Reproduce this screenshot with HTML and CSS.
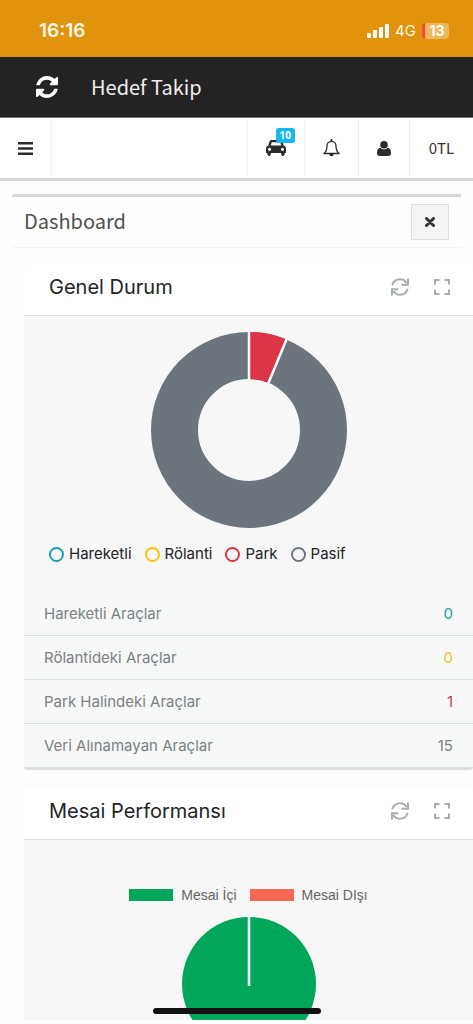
FILE: index.html
```html
<!DOCTYPE html>
<html lang="tr">
<head>
<meta charset="utf-8">
<meta name="viewport" content="width=device-width, initial-scale=1">
<title>Hedef Takip</title>
<link rel="stylesheet" href="styles.css">
</head>
<body>
<svg class="defs" aria-hidden="true">
  <symbol id="sync" viewBox="0 0 1536 1536"><path d="M1511 928q0 5-1 7-64 268-268 434.500t-478 166.500q-146 0-282.500-55t-243.500-157l-129 129q-19 19-45 19t-45-19-19-45v-448q0-26 19-45t45-19h448q26 0 45 19t19 45-19 45l-137 137q71 66 161 102t187 36q134 0 250-65t186-179q11-17 53-117 8-23 30-23h192q13 0 22.500 9.500t9.500 22.500zm25-800v448q0 26-19 45t-45 19h-448q-26 0-45-19t-19-45 19-45l138-138q-148-137-349-137-134 0-250 65t-186 179q-11 17-53 117-8 23-30 23h-199q-13 0-22.500-9.500t-9.500-22.500v-7q65-268 270-434.500t480-166.500q146 0 284 55.500t245 156.500l130-129q19-19 45-19t45 19 19 45z"/></symbol>
  <symbol id="reload" viewBox="0 0 18 18"><path d="M1.300 7.200C2.300 3.600 5.300 1.200 9 1.200c2.900 0 5.200 1.400 6.700 3.900M16.700 10.800c-1 3.600-4 6-7.700 6-2.900 0-5.200-1.400-6.700-3.900M17 .5v6.300h-6.300M1 17.500v-6.300h6.300" fill="none" stroke="currentColor" stroke-width="2"/></symbol>
  <symbol id="expand" viewBox="0 0 16 16"><path d="M1 5.500V1h4.500M10.500 1H15v4.500M15 10.500V15h-4.500M5.500 15H1v-4.500" fill="none" stroke="currentColor" stroke-width="2"/></symbol>
</svg>
<div class="screen">
  <div class="status">
    <span class="clock">16:16</span>
    <div class="status-right">
      <svg width="22" height="14" viewBox="0 0 22 14" fill="#fff"><rect y="9" width="4" height="5" rx="1"/><rect x="6" y="6" width="4" height="8" rx="1"/><rect x="12" y="3" width="4" height="11" rx="1"/><rect x="18" width="4" height="14" rx="1"/></svg>
      <span class="network">4G</span>
      <span class="battery">13</span>
    </div>
  </div>
  <header class="appbar">
    <button class="icon-btn" aria-label="Yenile"><svg width="22" height="22" fill="currentColor"><use href="#sync"/></svg></button>
    <h1>Hedef Takip</h1>
  </header>
  <nav class="toolbar">
    <button class="tool menu" aria-label="Menü"><svg width="15" height="13" viewBox="0 0 15 13"><path d="M0 1.300h15M0 6.500h15M0 11.700h15" stroke="currentColor" stroke-width="2.500"/></svg></button>
    <button class="tool cars" aria-label="Araçlar">
      <svg width="20" height="16" viewBox="0 0 20 16"><path fill="currentColor" fill-rule="evenodd" d="M5.500 0h9c1 0 1.700.6 2 1.500l1.200 4.200C19.200 6 20 7 20 8.300v4.200c0 .3-.2.500-.5.500H18.600v1.200a1.700 1.700 0 0 1-3.400 0V13H4.800v1.200a1.700 1.700 0 0 1-3.400 0V13H.5c-.3 0-.5-.2-.5-.5V8.300C0 7 .8 6 2.300 5.700l1.200-4.200C3.800.6 4.500 0 5.500 0zM5.700 2.200 4.800 5.600h10.400l-.9-3.400zM3.500 7.700a1.600 1.600 0 1 0 0 3.200 1.600 1.600 0 0 0 0-3.200zm13 0a1.600 1.600 0 1 0 0 3.200 1.600 1.600 0 0 0 0-3.200z"/></svg>
      <span class="badge">10</span>
    </button>
    <button class="tool bell" aria-label="Bildirimler"><svg width="17" height="18" viewBox="0 0 17 18"><path fill="none" stroke="currentColor" stroke-width="1.300" stroke-linejoin="round" d="M1 14.500c2.300-1.900 3-4.200 3-7.500 0-2.600 1.800-4.700 4.500-4.700S13 4.400 13 7c0 3.300.7 5.600 3 7.500z"/><path fill="currentColor" d="M7.600 0h1.800v2.500H7.600zM6.300 15h4.400a2.200 2.200 0 0 1-4.400 0z"/></svg></button>
    <button class="tool user" aria-label="Hesap"><svg width="14" height="15" viewBox="0 0 14 15" fill="currentColor"><circle cx="7" cy="3.800" r="3.800"/><path d="M3.300 6.800A5 5 0 0 0 7 8.400a5 5 0 0 0 3.700-1.600C13 6.900 14 9.300 14 12.200 14 14 12.900 15 11.300 15H2.700C1.100 15 0 14 0 12.200 0 9.300 1 6.900 3.300 6.800z"/></svg></button>
    <a class="tool balance" href="#bakiye">0TL</a>
  </nav>
  <main class="content">
    <div class="page-head">
      <h2>Dashboard</h2>
      <button class="close" aria-label="Kapat"><svg width="10" height="10" viewBox="0 0 10 10"><path d="M1.500 1.500l7 7M8.500 1.500l-7 7" stroke="currentColor" stroke-width="3" stroke-linecap="round"/></svg></button>
    </div>

    <section class="panel">
      <div class="panel-head">
        <h3>Genel Durum</h3>
        <button class="icon-btn" aria-label="Yenile"><svg width="18" height="18"><use href="#reload"/></svg></button>
        <button class="icon-btn" aria-label="Tam ekran"><svg width="16" height="16"><use href="#expand"/></svg></button>
      </div>
      <div class="panel-body status-body">
        <svg class="chart" width="198" height="198" viewBox="-99 -99 198 198" role="img" aria-label="Park 1, Pasif 15">
          <circle r="74.500" fill="none" stroke="#6c757d" stroke-width="47"/>
          <path d="M0-98A98 98 0 0 1 37.500-90.540L19.520-47.120A51 51 0 0 0 0-51z" fill="#dc3545"/>
          <path d="M0-99V-50M37.900-91.500 19.100-46.200" stroke="#fff" stroke-width="2.500"/>
        </svg>
        <ul class="legend">
          <li class="teal">Hareketli</li>
          <li class="yellow">Rölanti</li>
          <li class="red">Park</li>
          <li class="gray">Pasif</li>
        </ul>
      </div>
      <ul class="stats">
        <li>Hareketli Araçlar<span class="teal">0</span></li>
        <li>Rölantideki Araçlar<span class="yellow">0</span></li>
        <li>Park Halindeki Araçlar<span class="red">1</span></li>
        <li>Veri Alınamayan Araçlar<span>15</span></li>
      </ul>
    </section>

    <section class="panel">
      <div class="panel-head">
        <h3>Mesai Performansı</h3>
        <button class="icon-btn" aria-label="Yenile"><svg width="18" height="18"><use href="#reload"/></svg></button>
        <button class="icon-btn" aria-label="Tam ekran"><svg width="16" height="16"><use href="#expand"/></svg></button>
      </div>
      <div class="panel-body work-body">
        <ul class="keys">
          <li class="inside">Mesai İçi</li>
          <li class="outside">Mesai DIşı</li>
        </ul>
        <svg class="chart" width="134" height="134" viewBox="-67 -67 134 134" role="img" aria-label="Mesai İçi"><circle r="67" fill="#00a65a"/><path d="M0-67V2" stroke="#fff" stroke-width="2.500"/></svg>
      </div>
    </section>
  </main>
</div>
<div class="home-bar"></div>
</body>
</html>
```

FILE: styles.css
```css
*,
*::before {
  box-sizing: border-box;
}

body {
  margin: 0;
  background: #fefefe;
  color: #212529;
  font-family: Inter, "Liberation Sans", sans-serif;
  font-size: 16px;
}

h1, h2, h3, ul {
  margin: 0;
  padding: 0;
  font-weight: 400;
  list-style: none;
}

button {
  padding: 0;
  border: 0;
  background: none;
  color: inherit;
  font: inherit;
}

svg {
  display: block;
}

.defs {
  display: none;
}

.screen {
  display: flex;
  flex-direction: column;
  height: 100vh;
  padding-bottom: 4px;
  overflow: hidden;
}

.status {
  display: flex;
  flex: none;
  align-items: center;
  justify-content: space-between;
  height: 57px;
  padding: 4px 24px 0 39px;
  background: #e0930b;
  color: #fff8e8;
}

.clock {
  font-size: 19px;
  font-weight: 600;
}

.status-right {
  display: flex;
  align-items: center;
  gap: 6px;
}

.network {
  font-size: 15px;
}

.battery {
  width: 27px;
  border-left: 3px solid #ff453a;
  border-radius: 4px;
  background: #efb75c;
  color: #fff;
  font-size: 14px;
  font-weight: 700;
  line-height: 16px;
  text-align: center;
}

.appbar {
  display: flex;
  flex: none;
  align-items: center;
  gap: 33px;
  height: 61px;
  padding: 0 36px;
  border-bottom: 1px solid #777;
  background: #232323;
  color: #fff;
}

.appbar h1 {
  color: #eee;
  font-family: "Noto Sans CJK SC", sans-serif;
  font-size: 20px;
  line-height: 30px;
}

.toolbar {
  display: flex;
  flex: none;
  height: 63px;
  padding: 2px 0;
  border-bottom: 3px solid #d2d6d8;
  border-top-left-radius: 4px;
  background: #fff;
  color: #2b2b2b;
}

.tool {
  display: flex;
  align-items: center;
  justify-content: center;
  border-left: 1px solid #edf0f2;
}

.menu {
  width: 52px;
  margin-right: auto;
  border-right: 1px solid #edf0f2;
  border-left: 0;
}

.cars {
  position: relative;
  width: 57px;
}

.badge {
  position: absolute;
  top: 8px;
  right: 9px;
  padding: 0 4px;
  border-radius: 3px;
  background: #12b8ee;
  color: #fff;
  font-family: "Open Sans", sans-serif;
  font-size: 10px;
  font-weight: 700;
  line-height: 15px;
}

.bell {
  width: 54px;
}

.user {
  width: 51px;
}

.balance {
  width: 64px;
  padding-bottom: 2px;
  color: #333;
  font-family: "Noto Sans CJK SC", sans-serif;
  font-size: 15px;
  text-decoration: none;
}

.content {
  flex: 1;
  min-height: 0;
  padding: 13px 0 0 24px;
  overflow: hidden;
}

.page-head {
  display: flex;
  align-items: center;
  justify-content: space-between;
  height: 54px;
  margin: 0 12px 13px -12px;
  padding: 0 12px;
  border-top: 3px solid #d2d6da;
  border-bottom: 1px solid #f4f4f4;
  border-top-left-radius: 3px;
}

.page-head h2 {
  padding-bottom: 3px;
  color: #505050;
  font-family: "Noto Sans CJK SC", sans-serif;
  font-size: 20px;
  line-height: 30px;
}

.close {
  display: flex;
  align-items: center;
  justify-content: center;
  width: 38px;
  height: 36px;
  border: 1px solid #ddd;
  background: #f4f4f4;
  color: #333;
}

.panel {
  margin-bottom: 17px;
  border-top: 1px solid #fafafa;
  border-radius: 4px;
  background: #fff;
  box-shadow: 0 2px 1px #d8dcdd;
}

.panel-head {
  display: flex;
  align-items: center;
  gap: 25px;
  height: 54px;
  padding: 0 23px 4px 25px;
  border-bottom: 1px solid #dfdfdf;
  color: #a5adb0;
}

.panel-head h3 {
  margin-right: auto;
  color: #212529;
  font-size: 20px;
}

.panel-body {
  display: flex;
  flex-direction: column;
  align-items: center;
  background: #f7f7f7;
}

.status-body {
  padding: 15px 0 28px;
}

.legend {
  display: flex;
  gap: 13px;
  align-self: flex-start;
  margin: 15px 0 0 25px;
  font-size: 15px;
  line-height: 20px;
}

.legend li {
  display: flex;
  align-items: center;
  gap: 5px;
  color: #212529;
}

.legend li::before {
  width: 15px;
  height: 15px;
  border: 2px solid #6c757d;
  border-radius: 50%;
  content: "";
}

.legend .teal::before {
  border-color: #17a2b8;
}

.legend .yellow::before {
  border-color: #ffc107;
}

.legend .red::before {
  border-color: #dc3545;
}

.stats {
  background: #f7f9f8;
  color: #7b8084;
  font-size: 15px;
}

.stats li {
  display: flex;
  align-items: center;
  justify-content: space-between;
  height: 44px;
  padding: 0 20px;
  border-bottom: 1px solid #dcdfe0;
}

.stats .teal {
  color: #17a2a8;
}

.stats .yellow {
  color: #f5bd20;
}

.stats .red {
  color: #dc3545;
}

.work-body {
  padding: 45px 0 20px;
}

.keys {
  display: flex;
  gap: 13px;
  margin-bottom: 12px;
  color: #666;
  font-family: "Liberation Sans", sans-serif;
  font-size: 14px;
  line-height: 20px;
}

.keys li {
  display: flex;
  align-items: center;
  gap: 8px;
}

.keys li::before {
  width: 44px;
  height: 12px;
  background: #00a65a;
  content: "";
}

.keys .outside::before {
  background: #f56954;
}

.home-bar {
  position: fixed;
  bottom: 10px;
  left: 50%;
  width: 168px;
  height: 6px;
  margin-left: -84px;
  border-radius: 3px;
  background: #111;
}
```
